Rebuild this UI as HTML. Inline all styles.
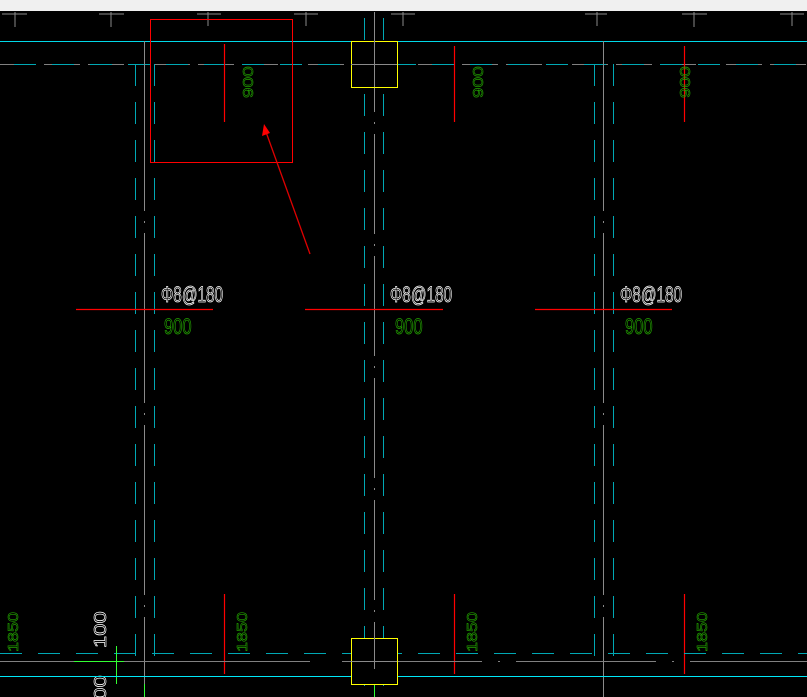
<!DOCTYPE html>
<html><head><meta charset="utf-8"><style>
html,body{margin:0;padding:0;background:#000;}
svg{display:block}
text{font-family:"Liberation Sans Narrow","Liberation Sans",sans-serif;}
</style></head><body>
<svg width="807" height="697" viewBox="0 0 807 697" xmlns="http://www.w3.org/2000/svg">
<rect width="807" height="697" fill="#000"/>
<rect width="807" height="11" fill="#f0f0f0"/>
<g stroke="#8a8a8a" stroke-width="1">
<path d="M2 14H27M15 12V27"/><path d="M99 14H124M111 12V27"/><path d="M197 14H221M208 12V26"/><path d="M294 14H318M306 12V26"/><path d="M391 14H415M403 12V26"/><path d="M585 14H607M597 12V26"/><path d="M682 14H707M694 12V27"/><path d="M780 14H804M792 12V26"/>
</g>
<line x1="0" y1="41.5" x2="807" y2="41.5" stroke="#00d8e8" stroke-width="1"/>
<line x1="0" y1="64.5" x2="807" y2="64.5" stroke="#808080" stroke-width="1" stroke-dasharray="14 8"/>
<line x1="14" y1="64.5" x2="807" y2="64.5" stroke="#00a8b4" stroke-width="1" stroke-dasharray="22 16"/>
<g stroke-width="1">
<line x1="144.5" y1="41" x2="144.5" y2="697" stroke="#8a8a8a" stroke-dasharray="170 10 2 10"/>
<line x1="135.5" y1="64" x2="135.5" y2="660" stroke="#00a8b4" stroke-dasharray="22 16"/>
<line x1="154.5" y1="64" x2="154.5" y2="660" stroke="#00a8b4" stroke-dasharray="22 16"/>
<line x1="374.5" y1="12" x2="374.5" y2="697" stroke="#8a8a8a" stroke-dasharray="100 10 2 10"/>
<line x1="364.5" y1="18" x2="364.5" y2="697" stroke="#00a8b4" stroke-dasharray="22 16"/>
<line x1="383.5" y1="18" x2="383.5" y2="697" stroke="#00a8b4" stroke-dasharray="22 16"/>
<line x1="603.5" y1="41" x2="603.5" y2="697" stroke="#8a8a8a" stroke-dasharray="170 10 2 10"/>
<line x1="594.5" y1="64" x2="594.5" y2="660" stroke="#00a8b4" stroke-dasharray="22 16"/>
<line x1="613.5" y1="64" x2="613.5" y2="660" stroke="#00a8b4" stroke-dasharray="22 16"/>
</g>
<rect x="351.5" y="41.5" width="46" height="46" fill="#000" stroke="#ffff00"/>
<line x1="374.5" y1="41" x2="374.5" y2="87" stroke="#8a8a8a"/><line x1="351" y1="64.5" x2="397" y2="64.5" stroke="#8a8a8a"/>
<rect x="150.5" y="19.5" width="142" height="143" fill="none" stroke="#ff0000"/>
<line x1="310" y1="254" x2="266" y2="132" stroke="#dd0000" stroke-width="1.3"/>
<path d="M264 124 L262 136 L270 133 Z" fill="#ff0000"/>
<g stroke="#ff0000" stroke-width="1.2">
<line x1="224.5" y1="44" x2="224.5" y2="122"/><line x1="454.5" y1="46" x2="454.5" y2="122"/><line x1="684.5" y1="46" x2="684.5" y2="122"/>
<line x1="224.5" y1="594" x2="224.5" y2="674"/><line x1="454.5" y1="594" x2="454.5" y2="674"/><line x1="684.5" y1="594" x2="684.5" y2="674"/>
<line x1="76" y1="309.5" x2="213" y2="309.5"/><line x1="305" y1="309.5" x2="443" y2="309.5"/><line x1="535" y1="309.5" x2="672" y2="309.5"/>
</g>
<g fill="none" stroke="#22a000" font-size="20" stroke-width="0.8">
<text transform="translate(253,98) rotate(-90) scale(0.95,0.75)">900</text>
<text transform="translate(483,98) rotate(-90) scale(0.95,0.75)">900</text>
<text transform="translate(690,98) rotate(-90) scale(0.95,0.75)">900</text>
<text transform="translate(18,652) rotate(-90) scale(0.9,0.75)">1850</text>
<text transform="translate(247,652) rotate(-90) scale(0.9,0.75)">1850</text>
<text transform="translate(477,652) rotate(-90) scale(0.9,0.75)">1850</text>
<text transform="translate(707,652) rotate(-90) scale(0.9,0.75)">1850</text>
</g>
<g fill="none" stroke="#22a000" font-size="22" stroke-width="0.8">
<text transform="translate(164,334) scale(0.75,1)">900</text>
<text transform="translate(395,334) scale(0.75,1)">900</text>
<text transform="translate(625,334) scale(0.75,1)">900</text>
</g>
<g fill="none" stroke="#ffffff" font-size="22" stroke-width="0.8">
<text transform="translate(161,302) scale(0.7,1)">Φ8@180</text>
<text transform="translate(390,302) scale(0.7,1)">Φ8@180</text>
<text transform="translate(620,302) scale(0.7,1)">Φ8@180</text>
<text transform="translate(106,648) rotate(-90) scale(1,0.8)">100</text>
<text transform="translate(106,712) rotate(-90) scale(1,0.8)">100</text>
</g>
<line x1="0" y1="653.5" x2="807" y2="653.5" stroke="#00a8b4" stroke-dasharray="22 16"/>
<line x1="0" y1="661.5" x2="310" y2="661.5" stroke="#808080"/>
<line x1="342" y1="661.5" x2="807" y2="661.5" stroke="#808080" stroke-dasharray="140 16 2 16"/>
<line x1="74" y1="661.5" x2="124" y2="661.5" stroke="#33ff33"/>
<line x1="116.5" y1="646" x2="116.5" y2="684" stroke="#33ff33"/>
<line x1="144.5" y1="684" x2="144.5" y2="697" stroke="#33ff33"/>
<line x1="0" y1="676.5" x2="807" y2="676.5" stroke="#00e8f8"/>
<rect x="351.5" y="638.5" width="46" height="46" fill="#000" stroke="#ffff00"/>
<line x1="374.5" y1="638" x2="374.5" y2="669" stroke="#8a8a8a"/><line x1="351" y1="661.5" x2="397" y2="661.5" stroke="#8a8a8a"/>
<line x1="374.5" y1="685" x2="374.5" y2="697" stroke="#33ff33"/>
</svg>
</body></html>
